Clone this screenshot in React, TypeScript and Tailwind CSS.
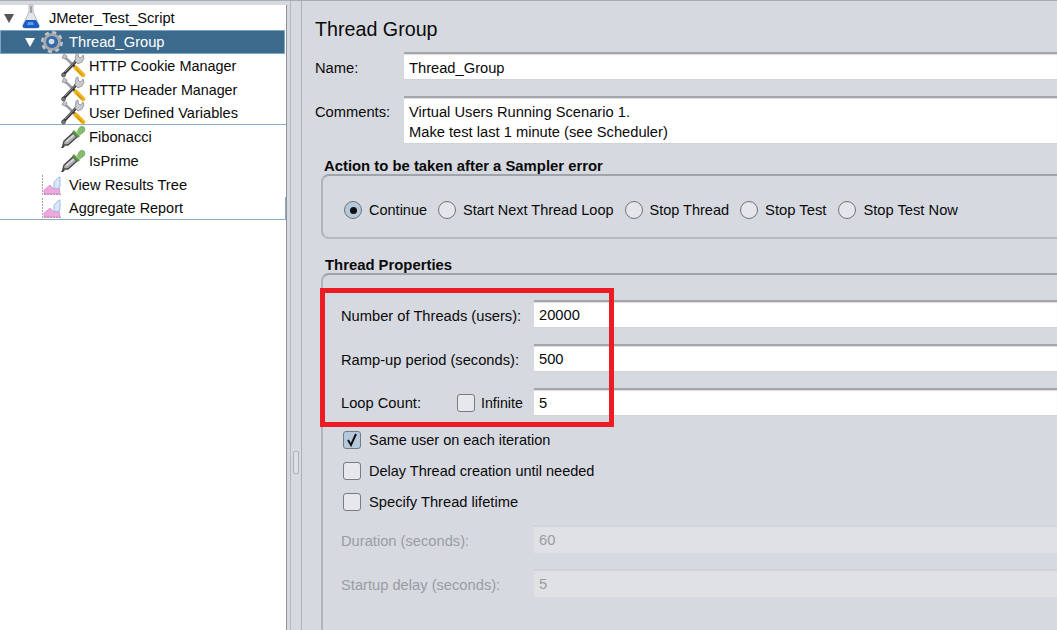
import React from 'react';

const Wrench = () => (
  <svg width="26" height="26" viewBox="0 0 26 26" className="-mt-[2px] shrink-0">
    <path d="M3 4 L8 8 L13 13" stroke="#9c9ea3" strokeWidth="2.5" fill="none" />
    <path d="M2 6 L4 2 L7 4 L6 7 Z" fill="#c5c7cb" stroke="#7d7f84" strokeWidth="0.6" />
    <path d="M12 12 L16 16" stroke="#55504a" strokeWidth="2.5" fill="none" />
    <path d="M16 16 L23 23" stroke="#eeb117" strokeWidth="4.5" strokeLinecap="round" fill="none" />
    <path d="M16.5 17.5 L22 23" stroke="#b57f08" strokeWidth="0.8" fill="none" />
    <path d="M3 23 L17 8" stroke="#3e3e3e" strokeWidth="3" fill="none" />
    <path d="M5 20 L15 9.5" stroke="#a6a8ab" strokeWidth="0.9" fill="none" />
    <path d="M15 9 L16 2 L18 1 L18.5 5 L21 6 L23 3 L24 6 L22 10 L18 12 Z" fill="#c9cbcf" stroke="#808287" strokeWidth="0.7" />
    <circle cx="3.5" cy="23" r="2" fill="#77797d" stroke="#333" strokeWidth="0.6" />
  </svg>
);

const Dropper = () => (
  <svg width="26" height="24" viewBox="0 0 26 24" className="shrink-0">
    <path d="M1 23 L3 20 L5 21 L3 23 Z" fill="#333" />
    <path d="M3 20 L4 16 L13 8 L17 12 L8 20 Z" fill="#a9abae" stroke="#454545" strokeWidth="1.3" />
    <path d="M6 17 L14 10" stroke="#e2e3e5" strokeWidth="1.2" />
    <path d="M13 6 L19 12" stroke="#5b9a45" strokeWidth="2.8" />
    <path d="M17 7 L19 3 Q21 0 24 2 Q26 4 24 7 L20 10 Z" fill="#86bd6c" stroke="#6aa352" strokeWidth="0.6" />
  </svg>
);

const Flask = () => (
  <svg width="20" height="25" viewBox="0 0 20 25" className="shrink-0">
    <path d="M8 1 L12 1 L12 8 L18 21 Q19 24 16 24 L4 24 Q1 24 2 21 L8 8 Z" fill="#e4e6ea" stroke="#b4b8be" strokeWidth="1" />
    <path d="M9 2 L11 2 L11 9 L9 9 Z" fill="#9ea3aa" />
    <path d="M5 16 L15 16 L18 21 Q19 24 16 24 L4 24 Q1 24 2 21 Z" fill="#1c5cc0" />
    <path d="M7 18 L12 18 L13 21 L6 21 Z" fill="#5a9bea" />
  </svg>
);

const Gear = () => (
  <svg width="22" height="22" viewBox="0 0 22 22" className="shrink-0">
    <circle cx="11" cy="11" r="9.5" fill="none" stroke="#c4c7cc" strokeWidth="3" strokeDasharray="4 3.45" />
    <circle cx="11" cy="11" r="7.5" fill="none" stroke="#a4a7ad" strokeWidth="3" />
    <circle cx="11" cy="11" r="5.5" fill="#3a6aa5" />
    <circle cx="10.5" cy="10.5" r="2.8" fill="#cddff2" />
  </svg>
);

const Graph = () => (
  <svg width="21" height="22" viewBox="0 0 21 22" className="shrink-0">
    <path d="M1.5 1 L1.5 20.5 L20 20.5" fill="none" stroke="#a3a3a3" strokeWidth="1" strokeDasharray="2 1" />
    <path d="M3 20 L3 16 L9 11 L13 15 L18 13 L19 20 Z" fill="#eda8de" stroke="#cf74bd" strokeWidth="0.6" />
    <path d="M13 14 L13 8 L18 3 L19 3 L19 13 L16 15 Z" fill="#d9e7f8" stroke="#8db1dd" strokeWidth="0.8" />
  </svg>
);

const Radio = ({ on }: { on?: boolean }) => (
  <span className={`flex h-[18px] w-[18px] shrink-0 items-center justify-center rounded-full border border-[#6f7479] ${on ? 'bg-[#b5c9dc]' : 'bg-[#e4e6ea]'}`}>
    {on && <span className="h-[7px] w-[7px] rounded-full bg-[#111]" />}
  </span>
);

const Check = ({ on }: { on?: boolean }) => (
  <span className={`flex h-[18px] w-[18px] shrink-0 items-center justify-center rounded-[3px] border border-[#777c82] ${on ? 'bg-[#b5c9dc]' : 'bg-[#e6e8eb]'}`}>
    {on && (
      <svg width="14" height="14" viewBox="0 0 14 14">
        <path d="M3 7 L6 12 L11 1" fill="none" stroke="#111" strokeWidth="2" />
      </svg>
    )}
  </span>
);

const Row = ({ icon, label, pad, height = 'h-[24px]' }: { icon: React.ReactNode; label: string; pad: string; height?: string }) => (
  <div className={`flex items-center ${height} ${pad}`}>
    {icon}
    <span>{label}</span>
  </div>
);

const Field = ({ children, disabled, className }: { children: React.ReactNode; disabled?: boolean; className: string }) => (
  <div className={`flex-1 border-t-2 pl-[5px] ${disabled ? 'border-[#d0d3d8] bg-[#dfe1e5] text-[#999da3]' : 'border-b border-t-[#a2a5aa] border-b-[#d2d3d6] bg-white shadow-[inset_0_1px_1px_#dcdcdc]'} ${className}`}>
    {children}
  </div>
);

const radios = [
  { label: 'Continue', cls: '' },
  { label: 'Start Next Thread Loop', cls: '' },
  { label: 'Stop Thread', cls: '' },
  { label: 'Stop Test', cls: 'text-[14.8px]' },
  { label: 'Stop Test Now', cls: 'ml-px text-[14.7px]' },
];

export default function App() {
  return (
    <div className="flex h-[630px] w-[1057px] overflow-hidden border-t border-[#a9acb3] bg-[#d6d9e0] font-['Liberation_Sans',sans-serif] text-[14.7px] leading-[24px] text-[#0a0a0a]">
      <div className="flex w-[302px] shrink-0 border-r border-[#aeb1b7]">
        <div className="mt-[4px] h-[625px] w-[287px] shrink-0 border-r border-[#8f9298] bg-white pt-[1px]">
          <div className="flex h-[24px] items-center pl-[4px]">
            <span className="mr-[7px] h-0 w-0 border-x-[5px] border-t-[9px] border-x-transparent border-t-[#555]" />
            <span className="-mt-[3px] mr-[8px]"><Flask /></span>
            <span>JMeter_Test_Script</span>
          </div>
          <div className="mr-px flex h-[24px] items-center border border-[#7fa5c4] bg-[#3b6a8d] pl-[24px] text-white">
            <span className="mr-[6px] h-0 w-0 border-x-[5px] border-t-[9px] border-x-transparent border-t-white" />
            <Gear />
            <span className="ml-[6px]">Thread_Group</span>
          </div>
          <Row icon={<Wrench />} label="HTTP Cookie Manager" pad="gap-[3px] pl-[60px] text-[14.45px]" />
          <Row icon={<Wrench />} label="HTTP Header Manager" pad="gap-[3px] pl-[60px] text-[14.3px]" />
          <Row icon={<Wrench />} label="User Defined Variables" pad="gap-[3px] pl-[60px] text-[14.6px]" height="h-[22px]" />
          <div className="h-px bg-[#89abc8]" />
          <Row icon={<Dropper />} label="Fibonacci" pad="gap-[3px] pl-[60px]" />
          <Row icon={<Dropper />} label="IsPrime" pad="gap-[3px] pl-[60px]" />
          <Row icon={<Graph />} label="View Results Tree" pad="gap-[7px] pl-[41px]" />
          <Row icon={<Graph />} label="Aggregate Report" pad="gap-[7px] border-r border-[#89abc8] pl-[41px] text-[14.45px]" height="h-[22px]" />
          <div className="h-px bg-[#89abc8]" />
        </div>
        <div className="ml-[3px] flex flex-1 items-center justify-center border-l border-[#b4b7bd]">
          <div className="mt-[294px] h-[23px] w-[6px] rounded-[2px] border border-[#aeb1b7] bg-[#dcdfe4]" />
        </div>
      </div>

      <div className="flex-1 pl-[13px] pt-[14px]">
        <h1 className="text-[19.7px] leading-[28px]">Thread Group</h1>
        <div className="mt-[9px] flex items-center">
          <span className="w-[89px] pt-[3px]">Name:</span>
          <Field className="h-[28px] leading-[28px]">Thread_Group</Field>
        </div>
        <div className="mt-[16px] flex">
          <span className="w-[89px] pt-[4px]">Comments:</span>
          <Field className="h-[48px] pt-[4px] leading-[20px]">
            <div>Virtual Users Running Scenario 1.</div>
            <div>Make test last 1 minute (see Scheduler)</div>
          </Field>
        </div>

        <div className="mt-[13px] pl-[9px] text-[14.85px] font-bold leading-[18px]">Action to be taken after a Sampler error</div>
        <div className="-mt-[1px] ml-[6px] flex h-[65px] items-center gap-[11px] rounded-l-[8px] border-y-2 border-l-2 border-y-[#a0a3a9] border-b-[#b6b9bf] border-l-[#b0b3b9] pl-[21px] pt-[7px] text-[14.5px]">
          {radios.map((r, i) => (
            <label key={r.label} className={`flex items-center gap-[7px] ${r.cls}`}>
              <Radio on={i === 0} />
              {r.label}
            </label>
          ))}
        </div>

        <div className="mt-[17px] pl-[10px] text-[14.85px] font-bold leading-[18px]">Thread Properties</div>
        <div className="-mt-[1px] ml-[6px] h-[360px] rounded-tl-[8px] border-l-2 border-t-2 border-l-[#b0b3b9] border-t-[#a0a3a9] pl-[18px]">
          <div className="relative flex flex-col pt-[25px]">
            <div className="flex items-center">
              <span className="w-[193px] pt-[3px]">Number of Threads (users):</span>
              <Field className="h-[28px] leading-[26px]">20000</Field>
            </div>
            <div className="mt-[16px] flex items-center">
              <span className="w-[193px] pt-[3px]">Ramp-up period (seconds):</span>
              <Field className="h-[28px] leading-[26px]">500</Field>
            </div>
            <div className="mt-[16px] flex items-center">
              <span className="w-[116px] pt-[2px]">Loop Count:</span>
              <span className="flex w-[77px] items-center gap-[6px] pt-[2px] text-[14.2px]"><Check />Infinite</span>
              <Field className="h-[28px] leading-[27px]">5</Field>
            </div>
            <div className="absolute left-[-21px] top-[13px] h-[139px] w-[294px] border-[5px] border-[#ed1c24]" />
          </div>
          <div className="mt-[12px] flex flex-col gap-[7px] pl-[2px]">
            <label className="flex items-center gap-[8px] text-[14.5px]"><Check on />Same user on each iteration</label>
            <label className="flex items-center gap-[8px] text-[14.5px]"><Check />Delay Thread creation until needed</label>
            <label className="flex items-center gap-[8px] text-[14.7px]"><Check />Specify Thread lifetime</label>
          </div>
          <div className="mt-[11px] flex items-center text-[#999da3]">
            <span className="w-[193px] pt-[3px]">Duration (seconds):</span>
            <Field disabled className="h-[28px] leading-[26px]">60</Field>
          </div>
          <div className="mt-[16px] flex items-center text-[#999da3]">
            <span className="w-[193px] pt-[3px]">Startup delay (seconds):</span>
            <Field disabled className="h-[28px] leading-[26px]">5</Field>
          </div>
        </div>
      </div>
    </div>
  );
}
